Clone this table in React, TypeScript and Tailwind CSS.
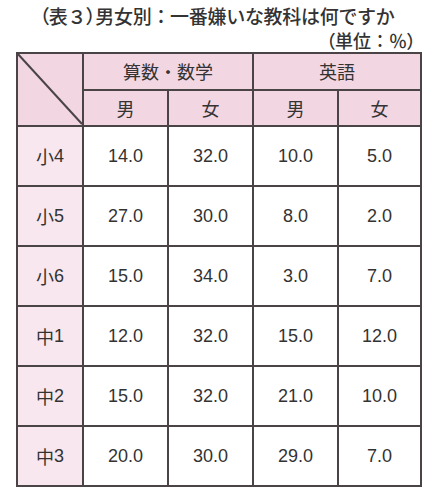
import React from "react";

const rows: [string, string, string, string, string][] = [
  ["小4", "14.0", "32.0", "10.0", "5.0"],
  ["小5", "27.0", "30.0", "8.0", "2.0"],
  ["小6", "15.0", "34.0", "3.0", "7.0"],
  ["中1", "12.0", "32.0", "15.0", "12.0"],
  ["中2", "15.0", "32.0", "21.0", "10.0"],
  ["中3", "20.0", "30.0", "29.0", "7.0"],
];

const jp = "font-['Noto_Sans_CJK_JP',sans-serif]";
const num = "font-['Liberation_Sans','Noto_Sans_CJK_JP',sans-serif]";
const palt = "[font-feature-settings:'palt']";

export default function App() {
  return (
    <div className="w-[434px] h-[496px] bg-white text-[#333]">
      <div className={`${jp} pt-[3px] flex flex-col`}>
        <div className="text-[19px] leading-[26px] font-medium text-center pl-[0px] tracking-[-0.3px]">
          <span className={palt}>（</span>表３<span className={palt}>）</span>男女別：一番嫌いな教科は何ですか
        </div>
        <div className="text-[18px] leading-[22px] font-medium text-right pr-[18px]">
          <span className={palt}>（</span>単位：％<span className={palt}>）</span>
        </div>
      </div>
      <div className="ml-[16px] mt-[1px] w-[406px] bg-[#4a4446] p-[2px] grid grid-cols-[64px_83px_83px_83px_81px] grid-rows-[35px_34px_58px_58px_58px_58px_58px_58px] gap-[2px]">
        <div className="row-span-2 bg-[#f2d6e2] relative">
          <svg className="absolute -left-[2px] -top-[2px]" width="68" height="73" viewBox="0 0 68 73">
            <line x1="1" y1="1" x2="66" y2="72" stroke="#4a4446" strokeWidth="2" />
          </svg>
        </div>
        <div className={`col-span-2 bg-[#f2d6e2] flex items-center justify-center text-[18px] ${jp}`}>
          算数・数学
        </div>
        <div className={`col-span-2 bg-[#f2d6e2] flex items-center justify-center text-[18px] ${jp}`}>
          英語
        </div>
        {["男", "女", "男", "女"].map((t, i) => (
          <div key={i} className={`bg-[#f2d6e2] flex items-center justify-center text-[18px] ${jp}`}>
            {t}
          </div>
        ))}
        {rows.map((r) => (
          <React.Fragment key={r[0]}>
            <div className={`bg-[#f8e7ee] flex items-center justify-center text-[18px] ${num}`}>
              <span className={jp}>{r[0].slice(0, 1)}</span>
              <span>{r[0].slice(1)}</span>
            </div>
            {r.slice(1).map((v, i) => (
              <div key={i} className={`bg-white flex items-center justify-center text-[18px] ${num}`}>
                {v}
              </div>
            ))}
          </React.Fragment>
        ))}
      </div>
    </div>
  );
}
